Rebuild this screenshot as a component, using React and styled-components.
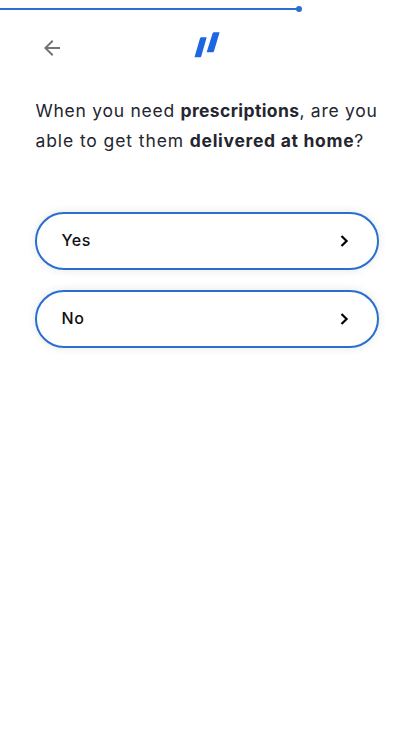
import React from "react";
import styled, { createGlobalStyle } from "styled-components";

const GlobalStyle = createGlobalStyle`
  * {
    box-sizing: border-box;
  }
  body {
    margin: 0;
    background: #fff;
    color: #24262f;
    font-family: Inter, "Open Sans", sans-serif;
  }
`;
const StyledPage = styled.div`
  min-height: 100vh;
  display: flex;
  flex-direction: column;
`;
const StyledProgress = styled.div`
  position: relative;
  width: ${({ $value }) => $value}px;
  height: 2px;
  margin-top: 8px;
  background: #286fce;
  &::after {
    content: "";
    position: absolute;
    right: -3px;
    top: -2px;
    width: 6px;
    height: 6px;
    border-radius: 50%;
    background: #286fce;
  }
`;
const StyledHeader = styled.header`
  display: grid;
  grid-template-columns: 24px 1fr 24px;
  align-items: center;
  height: 50px;
  margin-top: 10px;
  padding: 0 40px;
`;
const StyledBack = styled.button`
  display: flex;
  width: 24px;
  height: 24px;
  margin-top: 6px;
  padding: 0;
  border: 0;
  background: none;
  color: #757575;
  cursor: pointer;
`;
const StyledLogo = styled.svg`
  justify-self: center;
`;
const StyledMain = styled.main`
  padding: 26px 35px 0;
`;
const StyledQuestion = styled.h1`
  margin: 0;
  padding-left: 0.5px;
  font-size: 17.5px;
  font-weight: 400;
  line-height: 30px;
`;
const StyledLine = styled.span`
  display: block;
  white-space: nowrap;
  letter-spacing: ${({ $spacing }) => $spacing}px;
`;
const StyledStrong = styled.strong`
  font-weight: 700;
  letter-spacing: ${({ $spacing }) => $spacing}px;
`;
const StyledOptions = styled.div`
  display: flex;
  flex-direction: column;
  gap: 20px;
  margin-top: 56px;
`;
const StyledOption = styled.button`
  display: flex;
  align-items: center;
  justify-content: space-between;
  height: 58px;
  padding: 0 28px 0 24.5px;
  border: 2px solid #286fce;
  border-radius: 29px;
  background: #fff;
  box-shadow: 0 0 10px rgba(0, 0, 0, 0.1);
  color: #101010;
  font-family: inherit;
  font-size: 16px;
  font-weight: 500;
  line-height: 20px;
  letter-spacing: 0.6px;
  cursor: pointer;
`;
const StyledLabel = styled.span`
  padding-bottom: 2px;
`;

const BackIcon = () => (
  <svg width="24" height="24" viewBox="0 0 24 24" fill="currentColor">
    <path d="M20 11H7.83l5.59-5.59L12 4l-8 8 8 8 1.41-1.41L7.83 13H20v-2z" />
  </svg>
);
const Logo = () => (
  <StyledLogo width="26" height="26" viewBox="0 0 26 26" fill="#1d68e0">
    <path d="M7.4 5.2h5.3L7.2 24.6q-.2.7-.9.7H.5L6 6.3q.4-1.1 1.4-1.1z" />
    <path d="M20 .2h5.6L20 19.3q-.3 1-1.4 1h-5.4q-.6 0-.4-.6L18.6 1.3q.4-1.1 1.4-1.1z" />
  </StyledLogo>
);
const Option = ({ label }) => (
  <StyledOption type="button">
    <StyledLabel>{label}</StyledLabel>
    <svg width="10" height="14" viewBox="0 0 10 14" fill="none">
      <path d="M2.5 2 7.6 7l-5.1 5" stroke="#000" strokeWidth="2.2" />
    </svg>
  </StyledOption>
);

const App = () => {
  return (
    <StyledPage>
      <GlobalStyle />
      <StyledProgress $value={299} />
      <StyledHeader>
        <StyledBack type="button" aria-label="Back">
          <BackIcon />
        </StyledBack>
        <Logo />
      </StyledHeader>
      <StyledMain>
        <StyledQuestion>
          <StyledLine $spacing={0.74}>
            When you need <StyledStrong $spacing={0.38}>prescriptions</StyledStrong>, are you
          </StyledLine>
          <StyledLine $spacing={0.9}>
            able to get them <StyledStrong $spacing={0.7}>delivered at home</StyledStrong>?
          </StyledLine>
        </StyledQuestion>
        <StyledOptions>
          <Option label="Yes" />
          <Option label="No" />
        </StyledOptions>
      </StyledMain>
    </StyledPage>
  );
};

export default App;
